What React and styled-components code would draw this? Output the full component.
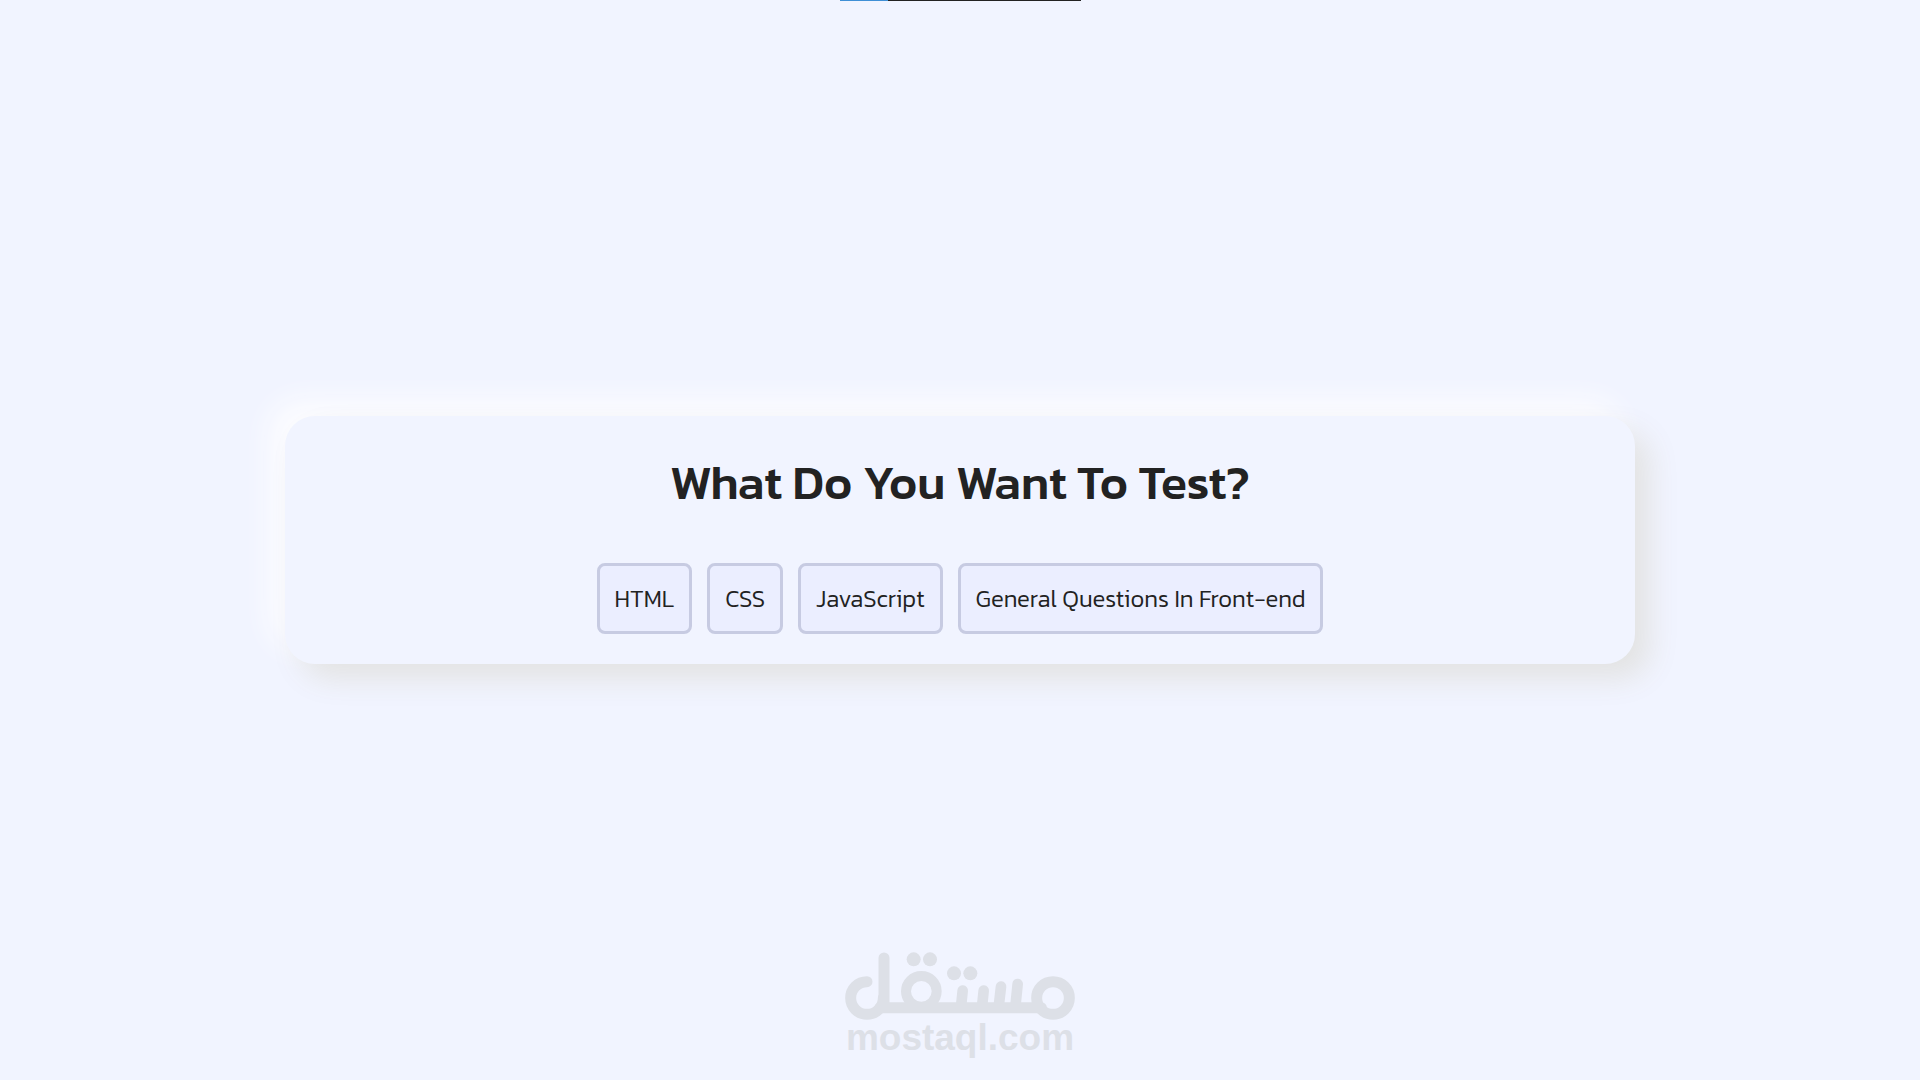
import styled, { createGlobalStyle } from "styled-components";

const theme = {
  background: "#f1f4ff",
  text: "#222222",
  option: "#ebeeff",
  border: "#c7cbe2",
  progress: "#3f8fd6",
  logo: "#dde0e7",
};

const topics = ["HTML", "CSS", "JavaScript", "General Questions In Front-end"];

const GlobalStyle = createGlobalStyle`
  * {
    box-sizing: border-box;
  }
  body {
    margin: 0;
    background: ${theme.background};
    color: ${theme.text};
    font-family: Kanit, "Noto Sans", sans-serif;
  }
`;

const Page = styled.div`
  min-height: 100vh;
  display: grid;
  grid-template-rows: 1fr auto 1fr;
  justify-items: center;
`;

const Progress = styled.div`
  display: flex;
  width: 241px;
  height: 1px;
  background: ${theme.text};
`;

const ProgressDone = styled.div`
  width: 20%;
  background: ${theme.progress};
`;

const Card = styled.main`
  width: calc(100% - 40px);
  max-width: 1350px;
  padding: 30px;
  border-radius: 30px;
  background: ${theme.background};
  text-align: center;
  box-shadow: 15px 15px 30px #e3e3e3, -15px -15px 30px #fdfdff;
`;

const Title = styled.h1`
  margin: 0 0 45px;
  font-size: 48px;
  font-weight: 500;
  line-height: 72px;
`;

const Options = styled.div`
  display: flex;
  flex-wrap: wrap;
  justify-content: center;
  gap: 15px;
`;

const Option = styled.button`
  padding: 15px;
  border: 3px solid ${theme.border};
  border-radius: 8px;
  background: ${theme.option};
  color: ${theme.text};
  font-family: inherit;
  font-size: 24px;
  font-weight: 300;
  line-height: 35px;
  cursor: pointer;
`;

const Footer = styled.footer`
  align-self: end;
  padding-bottom: 24px;
  color: ${theme.logo};
  text-align: center;
`;

const LogoMark = styled.svg`
  display: block;
  margin: 0 auto;
  width: 230px;
  height: 68px;
`;

const LogoName = styled.div`
  font-family: "Liberation Sans", Arial, sans-serif;
  font-size: 37px;
  font-weight: 700;
  line-height: 36px;
`;

const Logo = () => (
  <LogoMark viewBox="45 35 690 204" fill="none" stroke="currentColor" strokeWidth="33" strokeLinecap="round" aria-hidden="true">
    <circle cx="669" cy="173" r="49" />
    <circle cx="274" cy="153" r="46" strokeWidth="30" />
    <path d="M111 124A49 49 0 1 0 160 173" />
    <path d="M162 53V186" />
    <path d="M150 202H634" />
    <g strokeWidth="32">
      <path d="M398 151L393 200" />
      <path d="M461 151L456 200" />
      <path d="M513 139L506 200" />
      <path d="M563 131L556 200" />
    </g>
    <g fill="currentColor" stroke="none">
      <circle cx="251" cy="57" r="21" />
      <circle cx="300" cy="57" r="21" />
      <circle cx="372" cy="99" r="21" />
      <circle cx="421" cy="99" r="21" />
    </g>
  </LogoMark>
);

export default function App() {
  return (
    <>
      <GlobalStyle />
      <Page>
        <Progress>
          <ProgressDone />
        </Progress>
        <Card>
          <Title>What Do You Want To Test?</Title>
          <Options>
            {topics.map((topic) => (
              <Option key={topic} type="button">
                {topic}
              </Option>
            ))}
          </Options>
        </Card>
        <Footer>
          <Logo />
          <LogoName>mostaql.com</LogoName>
        </Footer>
      </Page>
    </>
  );
}
